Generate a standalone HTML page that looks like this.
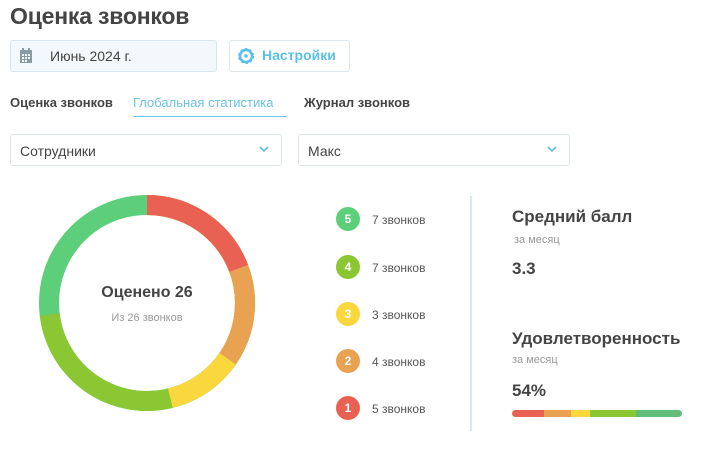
<!DOCTYPE html><html><head><meta charset="utf-8"><style>
body{margin:0;width:715px;height:465px;background:#fff;font-family:"Liberation Sans",sans-serif;color:#444;position:relative;overflow:hidden}
.a{position:absolute}
h1{position:absolute;left:10px;top:3px;margin:0;font-size:23px;font-weight:bold;color:#444;letter-spacing:-0.2px}
.box{position:absolute;border:1px solid #dde6ec;border-radius:3px;box-sizing:border-box}
.c{position:absolute;width:24px;height:24px;border-radius:50%;color:#fff;font-size:12px;font-weight:bold;text-align:center;line-height:24px;left:336px}
.l{position:absolute;left:372px;font-size:12px;color:#555}
</style></head><body>
<h1>Оценка звонков</h1>
<div class="box" style="left:10px;top:40px;width:207px;height:32px;background:#f2f8fb;border-color:#d6e6ee"></div>
<svg class="a" style="left:19px;top:48px" width="14" height="16" viewBox="0 0 14 16"><rect x="1" y="2" width="12" height="13" fill="#8a9aa2"/><rect x="3" y="0" width="2" height="4" fill="#8a9aa2"/><rect x="9" y="0" width="2" height="4" fill="#8a9aa2"/><g fill="#f2f8fb"><rect x="3" y="6" width="2" height="2"/><rect x="6" y="6" width="2" height="2"/><rect x="9" y="6" width="2" height="2"/><rect x="3" y="9" width="2" height="2"/><rect x="6" y="9" width="2" height="2"/><rect x="9" y="9" width="2" height="2"/><rect x="3" y="12" width="2" height="2"/><rect x="6" y="12" width="2" height="2"/></g></svg>
<div class="a" style="left:50px;top:48px;font-size:14px;color:#444">Июнь 2024 г.</div>
<div class="box" style="left:229px;top:40px;width:121px;height:32px"></div>
<svg class="a" style="left:237px;top:47px" width="18" height="18" viewBox="0 0 18 18"><circle cx="9" cy="9" r="6" fill="none" stroke="#5bc0e8" stroke-width="2.5"/><circle cx="9" cy="9" r="7.3" fill="none" stroke="#5bc0e8" stroke-width="1.4" stroke-dasharray="2.5 2.2"/><circle cx="9" cy="9" r="1.8" fill="#5bc0e8"/></svg>
<div class="a" style="left:262px;top:47px;font-size:14px;font-weight:bold;color:#5bc0e8">Настройки</div>
<div class="a" style="left:10px;top:95px;font-size:13px;font-weight:bold;color:#444">Оценка звонков</div>
<div class="a" style="left:133px;top:95px;font-size:13px;color:#6cc3e6">Глобальная статистика</div>
<div class="a" style="left:133px;top:116px;width:154px;height:1px;background:#6cc3e6"></div>
<div class="a" style="left:304px;top:95px;font-size:13px;font-weight:bold;color:#444">Журнал звонков</div>
<div class="box" style="left:10px;top:134px;width:272px;height:32px"></div>
<div class="a" style="left:20px;top:143px;font-size:14px;color:#444">Сотрудники</div>
<svg class="a" style="left:259px;top:146px" width="10" height="7"><path d="M1 1l4 4 4-4" fill="none" stroke="#5bc0e8" stroke-width="1.6"/></svg>
<div class="box" style="left:298px;top:134px;width:272px;height:32px"></div>
<div class="a" style="left:308px;top:143px;font-size:14px;color:#444">Макс</div>
<svg class="a" style="left:547px;top:146px" width="10" height="7"><path d="M1 1l4 4 4-4" fill="none" stroke="#5bc0e8" stroke-width="1.6"/></svg>
<svg class="a" style="left:0;top:0" width="300" height="465"><g transform="rotate(-90 147 303)" fill="none" stroke-width="20">
<circle cx="147" cy="303" r="98" stroke="#5dcf7a" stroke-dasharray="615.75 615.75"/>
<circle cx="147" cy="303" r="98" stroke="#8ac732" stroke-dasharray="449.97 615.75"/>
<circle cx="147" cy="303" r="98" stroke="#fad73c" stroke-dasharray="284.19 615.75"/>
<circle cx="147" cy="303" r="98" stroke="#e9a152" stroke-dasharray="213.14 615.75"/>
<circle cx="147" cy="303" r="98" stroke="#e86152" stroke-dasharray="118.41 615.75"/>
</g></svg>
<div class="a" style="left:47px;width:200px;top:284px;text-align:center;font-size:16px;font-weight:bold;color:#444">Оценено 26</div>
<div class="a" style="left:47px;width:200px;top:312px;text-align:center;font-size:11px;color:#999">Из 26 звонков</div>
<div class="c" style="top:207px;background:#5dcf7a">5</div><div class="l" style="top:213px">7 звонков</div>
<div class="c" style="top:255px;background:#8ac732">4</div><div class="l" style="top:261px">7 звонков</div>
<div class="c" style="top:302px;background:#fad73c">3</div><div class="l" style="top:308px">3 звонков</div>
<div class="c" style="top:349px;background:#e9a152">2</div><div class="l" style="top:355px">4 звонков</div>
<div class="c" style="top:396px;background:#e86152">1</div><div class="l" style="top:402px">5 звонков</div>
<div class="a" style="left:470px;top:196px;width:2px;height:235px;background:#dbe8f0"></div>
<div class="a" style="left:512px;top:207px;font-size:17px;font-weight:bold;color:#444">Средний балл</div>
<div class="a" style="left:514px;top:234px;font-size:11px;color:#999">за месяц</div>
<div class="a" style="left:512px;top:259px;font-size:17px;font-weight:bold;color:#444">3.3</div>
<div class="a" style="left:512px;top:329px;font-size:17px;font-weight:bold;color:#444">Удовлетворенность</div>
<div class="a" style="left:512px;top:354px;font-size:11px;color:#999">за месяц</div>
<div class="a" style="left:512px;top:381px;font-size:17px;font-weight:bold;color:#444">54%</div>
<div class="a" style="left:512px;top:410px;width:170px;height:7px;border-radius:4px;overflow:hidden;display:flex">
<div style="width:32px;background:#e86152"></div><div style="width:27px;background:#e9a152"></div><div style="width:19px;background:#fad73c"></div><div style="width:46px;background:#8ac732"></div><div style="width:46px;background:#62bd7a"></div></div>
</body></html>
